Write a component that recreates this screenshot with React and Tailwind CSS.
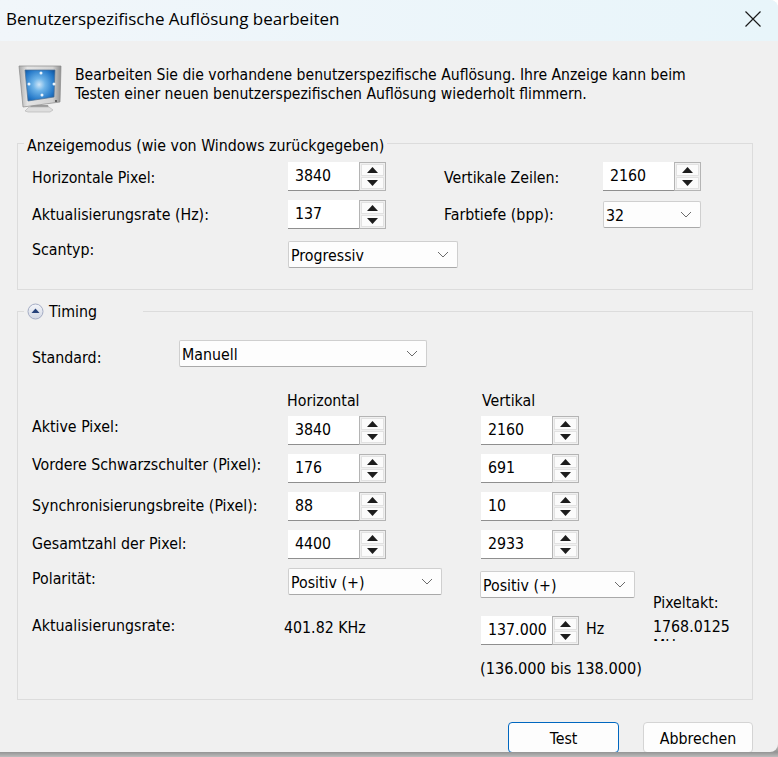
const LABEL_FONT = "font-['DejaVu_Sans_Condensed','DejaVu_Sans',sans-serif]";

const MonitorIcon = () => (
  <svg width="46" height="50" viewBox="0 0 46 50" className="shrink-0">
    <defs>
      <radialGradient id="screen" cx="0.47" cy="0.47" r="0.68">
        <stop offset="0" stopColor="#cfe6f8" />
        <stop offset="0.3" stopColor="#6db3e8" />
        <stop offset="0.75" stopColor="#2478c8" />
        <stop offset="1" stopColor="#0f5199" />
      </radialGradient>
      <linearGradient id="frame" x1="0" y1="0" x2="1" y2="0">
        <stop offset="0" stopColor="#a9a9a9" />
        <stop offset="0.2" stopColor="#e4e4e4" />
        <stop offset="0.8" stopColor="#d2d2d2" />
        <stop offset="1" stopColor="#8f8f8f" />
      </linearGradient>
    </defs>
    <path d="M13 40 H30 L31 43 H12 Z" fill="#9c9c9c" />
    <path d="M7 46 L11 42 H31 L35 45 L32 47 H10 Z" fill="#dedede" stroke="#b0b0b0" strokeWidth="0.6" />
    <path d="M1 1 H43 L42 37 L5 42 Z" fill="url(#frame)" stroke="#8a8a8a" strokeWidth="0.7" />
    <path d="M7 5 H37 L36 32 L10 36 Z" fill="url(#screen)" stroke="#4d6f8f" strokeWidth="0.7" />
    <circle cx="23" cy="8" r="1.5" fill="#eaf4fc" />
    <circle cx="11" cy="19" r="1.5" fill="#eaf4fc" />
    <circle cx="36" cy="19" r="1.5" fill="#eaf4fc" />
    <circle cx="24" cy="30" r="1.5" fill="#eaf4fc" />
    <circle cx="38" cy="36" r="0.9" fill="#3a3a3a" />
  </svg>
);

const Spinner = ({ value }) => (
  <div className="flex h-[29px] shrink-0">
    <div className="w-[71px] h-full bg-white border-b border-[#8f8f8f] pl-[7px] leading-[27px] text-[15.8px]">{value}</div>
    <div className="w-[27px] h-full flex flex-col gap-[1px] border border-[#b4b4b4] p-[1px]">
      <div className="flex-1 flex items-center justify-center bg-[#fbfbfb] border border-[#e2e2e2]">
        <svg width="11" height="6" viewBox="0 0 11 6"><path d="M5.5 0 L11 6 H0 Z" fill="#1c1c1c" /></svg>
      </div>
      <div className="flex-1 flex items-center justify-center bg-[#fbfbfb] border border-[#e2e2e2]">
        <svg width="11" height="6" viewBox="0 0 11 6"><path d="M0 0 H11 L5.5 6 Z" fill="#1c1c1c" /></svg>
      </div>
    </div>
  </div>
);

const Select = ({ value, w }) => (
  <div className={`${w} h-[27px] shrink-0 flex items-center justify-between bg-[#fdfdfd] border border-[#cfcfcf] border-b-[#a9a9a9] rounded-[2px] pl-[2px] pr-[8px]`}>
    <span className="pt-[2px]">{value}</span>
    <svg width="12" height="7" viewBox="0 0 12 7"><path d="M1 1 L6 6 L11 1" fill="none" stroke="#6b6b6b" strokeWidth="1" /></svg>
  </div>
);

const TimingRow = ({ label, h, v, raised }) => (
  <div className="flex items-center h-[29px] mb-[9px]">
    <div className={`w-[256px] ${raised ? "pb-[8px]" : "pb-[2px]"}`}>{label}</div>
    <Spinner value={h} />
    <div className="w-[95px]" />
    <Spinner value={v} />
  </div>
);

export default function App() {
  return (
    <div className={`w-[778px] h-[757px] bg-[linear-gradient(to_bottom,#ffffff_735px,#949494_752px,#bcbcbc_757px)] text-black text-[15.8px] leading-[19px] overflow-hidden ${LABEL_FONT}`}>
      <div className="h-[752px] bg-[#f0f0f0] rounded-tr-[8px] rounded-br-[8px] overflow-hidden">
        <div className="h-[41px] bg-gradient-to-r from-[#f1f6fa] to-[#e8f5fa] flex justify-between pl-[6px] pr-[17px] pt-[8px]">
          <span className="font-['Open_Sans',sans-serif] text-[17px] leading-[22px]">Benutzerspezifische Auflösung bearbeiten</span>
          <svg width="16" height="16" viewBox="0 0 16 16" className="mt-[3px]"><path d="M0.5 0.5 L15.5 15.5 M15.5 0.5 L0.5 15.5" stroke="#1a1a1a" strokeWidth="1.2" /></svg>
        </div>

        <div className="flex pl-[18px] pt-[24px] h-[64px]">
          <MonitorIcon />
          <p className="ml-[11px] pt-[1px] w-[650px] text-[15.6px]">
            Bearbeiten Sie die vorhandene benutzerspezifische Auflösung. Ihre Anzeige kann beim
            <br />
            Testen einer neuen benutzerspezifischen Auflösung wiederholt flimmern.
          </p>
        </div>

        <fieldset className="ml-[17px] mt-[27px] w-[736px] h-[158px] border border-[#dcdcdc] pl-[14px]">
          <legend className="-ml-[8px] px-[3px] pt-[4px]">Anzeigemodus (wie von Windows zurückgegeben)</legend>
          <div className="flex items-center h-[29px] mt-[7px]">
            <div className="w-[256px] pt-[2px]">Horizontale Pixel:</div>
            <Spinner value="3840" />
            <div className="w-[58px]" />
            <div className="w-[159px] pt-[2px]">Vertikale Zeilen:</div>
            <Spinner value="2160" />
          </div>
          <div className="flex items-center h-[29px] mt-[9px]">
            <div className="w-[256px]">Aktualisierungsrate (Hz):</div>
            <Spinner value="137" />
            <div className="w-[58px]" />
            <div className="w-[159px]">Farbtiefe (bpp):</div>
            <Select value="32" w="w-[98px]" />
          </div>
          <div className="flex mt-[12px]">
            <div className="w-[256px] -mt-[1px]">Scantyp:</div>
            <Select value="Progressiv" w="w-[170px]" />
          </div>
        </fieldset>

        <fieldset className="ml-[17px] mt-[11px] w-[736px] h-[399px] border border-[#dcdcdc] pl-[14px]">
          <legend className="-ml-[8px] w-[119px] h-[21px] pl-[3px] flex items-center gap-[5px]">
            <svg width="17" height="17" viewBox="0 0 17 17">
              <defs>
                <linearGradient id="expand" x1="0" y1="0" x2="0" y2="1">
                  <stop offset="0" stopColor="#f4f6fa" />
                  <stop offset="1" stopColor="#d3d8e4" />
                </linearGradient>
              </defs>
              <circle cx="8.5" cy="8.5" r="7.5" fill="url(#expand)" stroke="#a4acc4" />
              <path d="M8.5 5.5 L12.5 10 H4.5 Z" fill="#27427a" />
            </svg>
            Timing
          </legend>

          <div className="flex items-center h-[27px] mt-[18px]">
            <div className="w-[147px] pt-[8px]">Standard:</div>
            <Select value="Manuell" w="w-[248px]" />
          </div>

          <div className="flex mt-[24px] h-[25px]">
            <div className="w-[255px]" />
            <div className="w-[195px]">Horizontal</div>
            <div>Vertikal</div>
          </div>

          <TimingRow label="Aktive Pixel:" h="3840" v="2160" raised />
          <TimingRow label="Vordere Schwarzschulter (Pixel):" h="176" v="691" raised />
          <TimingRow label="Synchronisierungsbreite (Pixel):" h="88" v="10" />
          <TimingRow label="Gesamtzahl der Pixel:" h="4400" v="2933" />

          <div className="flex mt-[1px]">
            <div className="w-[256px]">
              <div className="h-[48px] pt-[1px]">Polarität:</div>
              <div>Aktualisierungsrate:</div>
            </div>
            <div className="w-[192px]">
              <Select value="Positiv (+)" w="w-[154px]" />
              <div className="mt-[23px] -ml-[4px]">401.82 KHz</div>
            </div>
            <div className="w-[173px] pt-[3px]">
              <Select value="Positiv (+)" w="w-[155px]" />
              <div className="flex mt-[18px] ml-[1px]">
                <Spinner value="137.000" />
                <span className="ml-[7px] mt-[3px]">Hz</span>
              </div>
              <div className="mt-[14px] text-[16.2px]">(136.000 bis 138.000)</div>
            </div>
            <div className="w-[85px] pt-[25px]">
              <div>Pixeltakt:</div>
              <div className="mt-[5px] h-[24px] overflow-hidden">1768.0125 MHz</div>
            </div>
          </div>
        </fieldset>

        <div className="flex justify-end gap-[24px] pr-[25px] mt-[22px]">
          <div className="w-[111px] h-[31px] pt-[1px] flex items-center justify-center bg-[#fdfdfd] border border-[#0067c0] rounded-[4px]">Test</div>
          <div className="w-[110px] h-[31px] pt-[1px] flex items-center justify-center bg-[#fdfdfd] border border-[#d4d4d4] rounded-[4px]">Abbrechen</div>
        </div>
      </div>
    </div>
  );
}
